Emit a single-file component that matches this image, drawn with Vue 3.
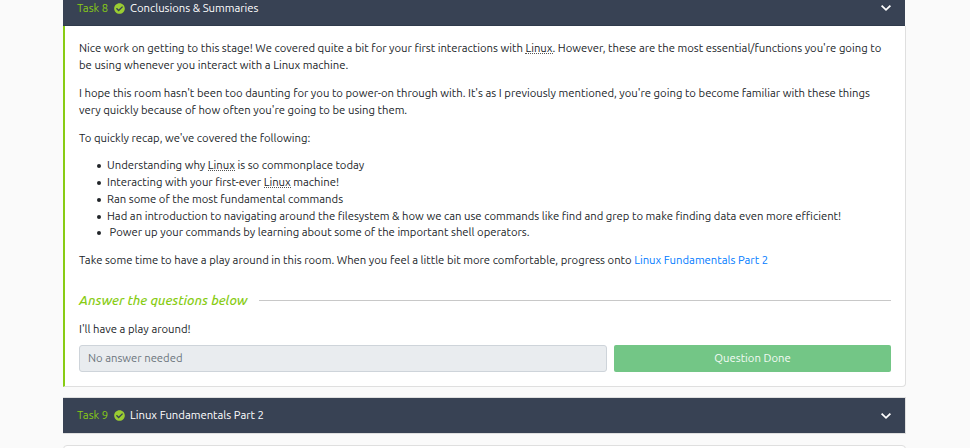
<script setup>
const questions = [
  { text: "I'll have a play around!", placeholder: 'No answer needed', action: 'Question Done' },
]
</script>

<template>
  <main class="page">
    <section class="task">
      <header class="bar bar-open">
        <span class="num">Task 8</span>
        <svg class="check" viewBox="0 0 512 512"><path fill="currentColor" d="M504 256c0 137-111 248-248 248S8 393 8 256 119 8 256 8s248 111 248 248zM227 387l184-184c6-6 6-16 0-23l-22-22c-7-6-17-6-23 0L216 308l-70-70c-6-6-16-6-23 0l-22 22c-6 7-6 17 0 23l104 104c6 6 16 6 22 0z" /></svg>
        <span class="name">Conclusions &amp; Summaries</span>
        <svg class="chevron" viewBox="0 0 12 8"><path d="M1.6 1.7 6 5.8l4.4-4.1" /></svg>
      </header>
      <div class="card">
        <p>
          <span class="line">Nice work on getting to this stage! We covered quite a bit for your first interactions with <span class="term">Linux</span>. However, these are the most essential/functions you're going to</span>
          <span class="line">be using whenever you interact with a Linux machine.</span>
        </p>
        <p>
          <span class="line">I hope this room hasn't been too daunting for you to power-on through with. It's as I previously mentioned, you're going to become familiar with these things</span>
          <span class="line">very quickly because of how often you're going to be using them.</span>
        </p>
        <p><span class="line">To quickly recap, we've covered the following:</span></p>
        <ul>
          <li>Understanding why <span class="term">Linux</span> is so commonplace today</li>
          <li>Interacting with your first-ever <span class="term">Linux</span> machine!</li>
          <li>Ran some of the most fundamental commands</li>
          <li>Had an introduction to navigating around the filesystem &amp; how we can use commands like find and grep to make finding data even more efficient!</li>
          <li>&nbsp;Power up your commands by learning about some of the important shell operators.</li>
        </ul>
        <p><span class="line">Take some time to have a play around in this room. When you feel a little bit more comfortable, progress onto <a>Linux Fundamentals Part 2</a></span></p>

        <h2><span>Answer the questions below</span></h2>
        <div v-for="q in questions" :key="q.text" class="question">
          <div class="ask">{{ q.text }}</div>
          <div class="row">
            <div class="field">{{ q.placeholder }}</div>
            <div class="btn">{{ q.action }}</div>
          </div>
        </div>
      </div>
    </section>

    <section class="task">
      <header class="bar bar-closed">
        <span class="num">Task 9</span>
        <svg class="check" viewBox="0 0 512 512"><path fill="currentColor" d="M504 256c0 137-111 248-248 248S8 393 8 256 119 8 256 8s248 111 248 248zM227 387l184-184c6-6 6-16 0-23l-22-22c-7-6-17-6-23 0L216 308l-70-70c-6-6-16-6-23 0l-22 22c-6 7-6 17 0 23l104 104c6 6 16 6 22 0z" /></svg>
        <span class="name">Linux Fundamentals Part 2</span>
        <svg class="chevron" viewBox="0 0 12 8"><path d="M1.6 1.7 6 5.8l4.4-4.1" /></svg>
      </header>
    </section>
    <div class="next"></div>
  </main>
</template>

<style>
body { background: #fafafa; }
</style>

<style scoped>
.page {
  box-sizing: border-box;
  width: 970px;
  height: 448px;
  overflow: hidden;
  padding: 0 64px 0 63px;
  background: #fafafa;
  color: #212529;
  font-family: Ubuntu, "Noto Sans", sans-serif;
  font-size: 11.29px;
  line-height: 16.8px;
}
.bar {
  display: flex;
  align-items: center;
  box-sizing: border-box;
  height: 35px;
  padding: 0 14px;
  background: #384254;
  color: #fff;
  white-space: nowrap;
}
.bar-open { margin-top: -9px; width: 842px; border-bottom: 1px solid #2f3a4b; }
.bar-closed {
  box-sizing: content-box;
  width: 814px;
  margin-top: 10px;
  border-top: 1px solid #dfdfdf;
  border-bottom: 1px solid #dfdfdf;
  box-shadow: 1px 0 #dfdfdf;
}
.num { width: 36.5px; color: #88cc14; }
.check { width: 11px; height: 11px; margin-right: 5.5px; color: #9acd32; }
.name { flex: 1; }
.chevron { width: 12px; height: 8px; margin-right: -1px; fill: none; stroke: #fff; stroke-width: 1.8; }
.card {
  box-sizing: border-box;
  width: 843px;
  height: 361px;
  padding: 14px 14px 0;
  background: #fff;
  border: solid #dfdfdf;
  border-width: 0 1px 1px 0;
  border-left: 2px solid #88cc14;
  border-radius: 0 0 4px 0;
}
p { margin: 0 0 11.2px; }
.line { display: block; white-space: nowrap; }
.term { border-bottom: 1px dotted #555; display: inline-block; line-height: 11px; }
ul { margin: -1.5px 0 12px; padding-left: 18px; list-style: none; }
li { line-height: 17px; white-space: pre; }
li:last-child { line-height: 16px; }
li::before {
  content: "";
  display: inline-block;
  width: 4px;
  height: 4px;
  margin-right: 6px;
  border-radius: 50%;
  background: #212529;
  vertical-align: 1px;
}
a { color: #007bff; }
h2 {
  display: flex;
  align-items: center;
  gap: 12px;
  margin: 22px 0 0;
  color: #88cc14;
  font-size: 13.38px;
  font-style: italic;
  font-weight: 500;
  line-height: 19px;
  white-space: nowrap;
}
h2::after { content: ""; flex: 1; height: 1px; background: #c8c8c8; }
.ask { margin-top: 10.7px; }
.row { display: flex; gap: 7px; margin-top: 8px; }
.field {
  box-sizing: border-box;
  width: 528px;
  height: 27px;
  padding: 0 8px;
  border: 1px solid #ced4da;
  border-radius: 3px;
  background: #e9ecef;
  color: #6c757d;
  line-height: 24px;
}
.btn {
  flex: 1;
  border-radius: 2px;
  background: #73c686;
  color: #f3fbf5;
  line-height: 26px;
  text-align: center;
}
.next {
  height: 30px;
  width: 841px;
  margin-top: 11px;
  border: 1px solid #dfdfdf;
  border-radius: 4px;
  background: #fff;
}
</style>
